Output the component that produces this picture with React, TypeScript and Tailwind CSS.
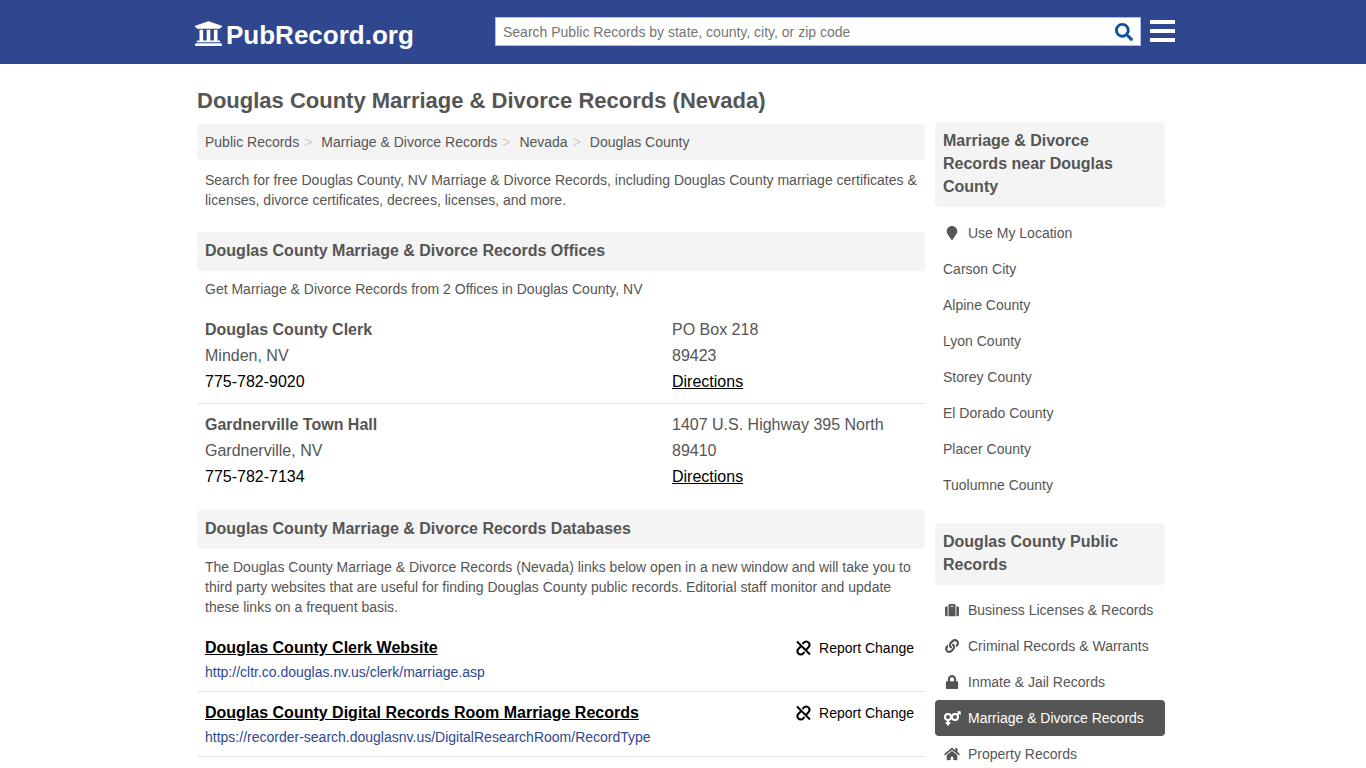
import type { ComponentType } from 'react'
import { FaHome, FaLink, FaLock, FaMapMarker, FaSearch, FaSuitcase } from 'react-icons/fa'

type Icon = ComponentType<{ className?: string }>

const crumbs = ['Public Records', 'Marriage & Divorce Records', 'Nevada']

const offices = [
  { name: 'Douglas County Clerk', city: 'Minden, NV', phone: '775-782-9020', street: 'PO Box 218', zip: '89423' },
  { name: 'Gardnerville Town Hall', city: 'Gardnerville, NV', phone: '775-782-7134', street: '1407 U.S. Highway 395 North', zip: '89410' },
]

const databases = [
  { title: 'Douglas County Clerk Website', url: 'http://cltr.co.douglas.nv.us/clerk/marriage.asp' },
  { title: 'Douglas County Digital Records Room Marriage Records', url: 'https://recorder-search.douglasnv.us/DigitalResearchRoom/RecordType' },
]

const nearby = ['Carson City', 'Alpine County', 'Lyon County', 'Storey County', 'El Dorado County', 'Placer County', 'Tuolumne County']

const recordTypes: { label: string; icon: Icon; active?: boolean }[] = [
  { label: 'Business Licenses & Records', icon: FaSuitcase },
  { label: 'Criminal Records & Warrants', icon: FaLink },
  { label: 'Inmate & Jail Records', icon: FaLock },
  { label: 'Marriage & Divorce Records', icon: CoupleIcon, active: true },
  { label: 'Property Records', icon: FaHome },
]

function CoupleIcon() {
  return (
    <svg viewBox="0 0 17 15" fill="none" stroke="currentColor" strokeWidth="2" className="w-[17px] h-[15px] shrink-0" aria-hidden="true">
      <circle cx="4" cy="6" r="3" />
      <path d="M4 9v5.5M1.7 12h4.600" />
      <circle cx="11" cy="6" r="3" />
      <path d="M13 4l2.500-2.500" />
      <path d="M12.800 0.300H16.700V4.200z" fill="currentColor" stroke="none" />
    </svg>
  )
}

function CourthouseIcon() {
  return (
    <svg viewBox="16 40 480 440" fill="currentColor" className="w-[27px] h-[25px] mt-0.5" aria-hidden="true">
      <path d="M496 128v16a8 8 0 0 1-8 8h-24v12c0 6.627-5.373 12-12 12H60c-6.627 0-12-5.373-12-12v-12H24a8 8 0 0 1-8-8v-16a8 8 0 0 1 4.941-7.392l232-80a7.996 7.996 0 0 1 6.118 0l232 80A8 8 0 0 1 496 128z" />
      <path d="M472 432H40c-13.255 0-24 10.745-24 24v16a8 8 0 0 0 8 8h464a8 8 0 0 0 8-8v-16c0-13.255-10.745-24-24-24z" />
      <path d="M96 192v192H60c-6.627 0-12 5.373-12 12v20h416v-20c0-6.627-5.373-12-12-12h-36V192h-64v192h-64V192h-64v192h-64V192H96z" />
    </svg>
  )
}

function BrokenLinkIcon() {
  return (
    <svg viewBox="0 0 16 16" fill="none" stroke="currentColor" strokeWidth="2" className="size-4" aria-hidden="true">
      <path d="M1 1.500l13 13" />
      <path d="M6.500 4l1.200-1.300a3.200 3.200 0 0 1 5 0 3.300 3.300 0 0 1 0 4.300L9.800 10" />
      <path d="M8.500 12l-1.200 1.300a3.200 3.200 0 0 1-5 0 3.300 3.300 0 0 1 0-4.300L5.200 6" />
    </svg>
  )
}

function Heading({ children }: { children: string }) {
  return <h2 className="bg-[#f4f4f4] rounded-sm px-2 pt-[7px] pb-[9px] text-base leading-[23px] font-bold">{children}</h2>
}

function SideLink({ label, icon: Icon, active }: { label: string; icon?: Icon; active?: boolean }) {
  return (
    <li>
      <a
        href="#"
        className={`flex items-center h-9 px-2 rounded text-sm whitespace-nowrap ${active ? 'bg-[#555] text-white' : ''}`}
      >
        {Icon && (
          <span className="w-[18px] mr-[7px] flex justify-center shrink-0">
            <Icon className="w-4 h-[14px]" />
          </span>
        )}
        {label}
      </a>
    </li>
  )
}

function Header() {
  return (
    <header className="bg-[#2f478f] h-16">
      <div className="max-w-[984px] mx-auto pl-1 h-16 flex items-start">
        <a href="#" className="w-[300px] shrink-0 mt-[19px] flex items-start gap-1 text-white text-[26px] leading-8 font-bold">
          <CourthouseIcon />
          PubRecord.org
        </a>
        <form className="flex-1 mt-[17px] h-[29px] bg-white border border-[#a9bfe8] flex items-center">
          <input
            type="text"
            aria-label="Search public records"
            placeholder="Search Public Records by state, county, city, or zip code"
            className="flex-1 min-w-0 px-[7px] text-sm outline-none placeholder:text-[#757575]"
          />
          <button type="submit" aria-label="Search" className="px-[7px] text-[#0d50a0]">
            <FaSearch className="size-[18px]" />
          </button>
        </form>
        <button type="button" aria-label="Menu" className="ml-[9px] mt-5 flex flex-col gap-[5px]">
          <span className="block w-[25px] h-1 bg-white" />
          <span className="block w-[25px] h-1 bg-white" />
          <span className="block w-[25px] h-1 bg-white" />
        </button>
      </div>
    </header>
  )
}

export default function App() {
  return (
    <div className="h-screen overflow-hidden bg-white text-[#555] font-['Liberation_Sans',Arial,sans-serif]">
      <Header />
      <div className="max-w-[984px] mx-auto pl-[6px] pr-[10px]">
        <div className="flex gap-[10px] items-start">
          <main className="flex-1 min-w-0">
            <h1 className="mt-[23px] mb-[10px] text-[22px] leading-[27px] font-bold">
              Douglas County Marriage &amp; Divorce Records (Nevada)
            </h1>

            <nav aria-label="Breadcrumb" className="bg-[#f4f4f4] rounded-sm h-9 px-2 flex items-center text-sm">
              {crumbs.map((crumb) => (
                <span key={crumb} className="flex">
                  <a href="#">{crumb}</a>
                  <span className="text-[#ccc] ml-[5px] mr-[9px]">&gt;</span>
                </span>
              ))}
              <span>Douglas County</span>
            </nav>

            <p className="mt-[10px] mb-[22px] px-2 text-sm leading-5">
              Search for free Douglas County, NV Marriage &amp; Divorce Records, including Douglas County marriage
              certificates &amp; licenses, divorce certificates, decrees, licenses, and more.
            </p>

            <Heading>Douglas County Marriage &amp; Divorce Records Offices</Heading>
            <p className="mt-2 mb-[10px] px-2 text-sm leading-5">
              Get Marriage &amp; Divorce Records from 2 Offices in Douglas County, NV
            </p>
            <div className="mb-3 divide-y divide-[#e8e8e8]">
              {offices.map((office) => (
                <div key={office.name} className="flex py-2 pl-2 text-base leading-[26px]">
                  <div className="flex-1">
                    <h3 className="font-bold">{office.name}</h3>
                    <p>{office.city}</p>
                    <a href="#" className="block text-black">{office.phone}</a>
                  </div>
                  <div className="w-[253px]">
                    <p>{office.street}</p>
                    <p>{office.zip}</p>
                    <a href="#" className="text-black underline">Directions</a>
                  </div>
                </div>
              ))}
            </div>

            <Heading>Douglas County Marriage &amp; Divorce Records Databases</Heading>
            <p className="mt-2 mb-[10px] px-2 text-sm leading-5">
              The Douglas County Marriage &amp; Divorce Records (Nevada) links below open in a new window and will take
              you to third party websites that are useful for finding Douglas County public records. Editorial staff
              monitor and update these links on a frequent basis.
            </p>
            {databases.map((db) => (
              <div key={db.title} className="py-2 pl-2 pr-[11px] border-b border-[#e8e8e8]">
                <div className="flex justify-between items-center h-[26px]">
                  <a href="#" className="text-base text-black font-bold underline">{db.title}</a>
                  <a href="#" className="flex items-center gap-[7px] text-sm text-black">
                    <BrokenLinkIcon />
                    Report Change
                  </a>
                </div>
                <p className="text-sm leading-[22px] text-[#2f478f]">{db.url}</p>
              </div>
            ))}
          </main>

          <aside className="w-[230px] shrink-0 mt-[58px]">
            <Heading>Marriage &amp; Divorce Records near Douglas County</Heading>
            <ul className="mt-2 mb-5">
              <SideLink label="Use My Location" icon={FaMapMarker} />
              {nearby.map((place) => (
                <SideLink key={place} label={place} />
              ))}
            </ul>
            <Heading>Douglas County Public Records</Heading>
            <ul className="mt-[7px]">
              {recordTypes.map((type) => (
                <SideLink key={type.label} {...type} />
              ))}
            </ul>
          </aside>
        </div>
      </div>
    </div>
  )
}
